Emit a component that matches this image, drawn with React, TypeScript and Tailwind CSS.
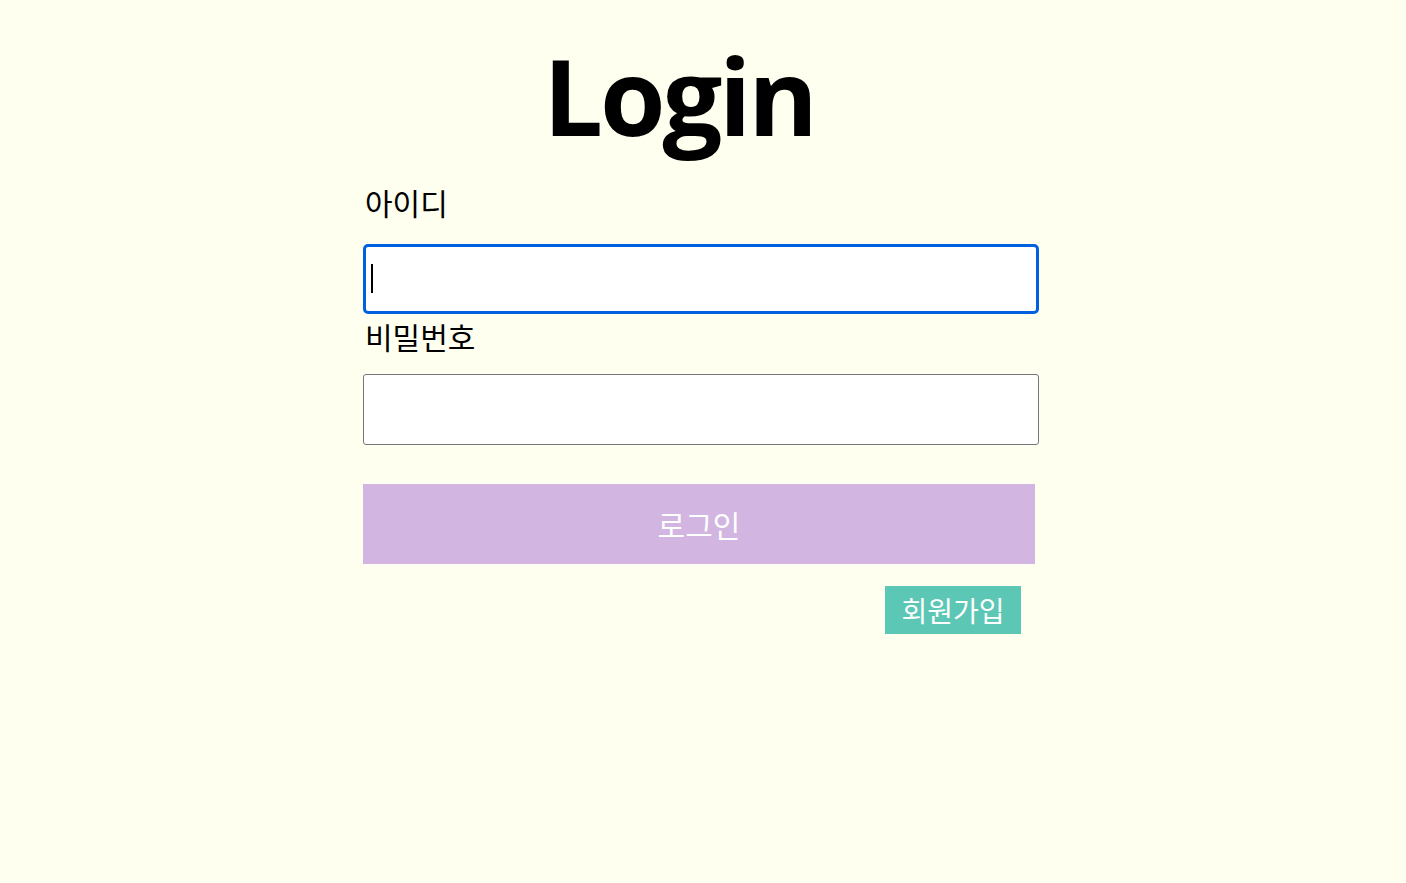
import * as React from "react";

export default function App() {
  return (
    <div className="min-h-screen bg-[#fffff0] font-['Noto_Sans_CJK_KR','Noto_Sans',sans-serif] text-black">
      <div className="mx-auto w-[680px] pt-[8px]">
        <h1 className="pr-[48px] text-center font-['Open_Sans','Noto_Sans_CJK_KR',sans-serif] text-[106px] font-bold leading-[174px] tracking-[-0.03em]">
          Login
        </h1>
        <form className="flex flex-col" onSubmit={(e) => e.preventDefault()}>
          <label htmlFor="userId" className="pl-[2px] text-[30px] leading-[40px]">
            아이디
          </label>
          <div className="relative mt-[22px]">
            <input
              id="userId"
              type="text"
              className="h-[70px] w-[676px] rounded-[5px] border-[3px] border-[#0060df] bg-white px-2 text-[24px] caret-transparent outline-none"
            />
            <span className="pointer-events-none absolute left-[8px] top-[20px] h-[29px] w-[2px] bg-black" />
          </div>
          <label htmlFor="password" className="mt-[2px] pl-[2px] text-[30px] leading-[40px]">
            비밀번호
          </label>
          <input
            id="password"
            type="password"
            className="mt-[18px] h-[71px] w-[676px] rounded-[3px] border border-[#767676] bg-white px-2 text-[24px] outline-none"
          />
          <button
            type="submit"
            className="mt-[39px] h-[80px] w-[672px] bg-[#d2b5e0] text-[30px] text-white"
          >
            로그인
          </button>
          <div className="flex justify-end pr-[22px] pt-[22px]">
            <button type="button" className="h-[48px] w-[136px] bg-[#5bc7b4] text-[28px] text-white">
              회원가입
            </button>
          </div>
        </form>
      </div>
    </div>
  );
}
